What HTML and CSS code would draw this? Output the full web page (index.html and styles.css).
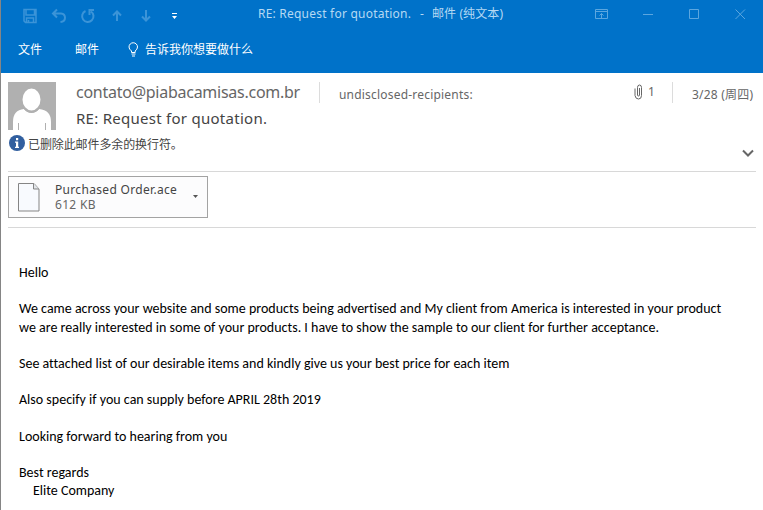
FILE: index.html
```html
<!DOCTYPE html>
<html lang="zh-CN">
<head>
<meta charset="utf-8">
<title>RE: Request for quotation.</title>
<link rel="stylesheet" href="styles.css">
</head>
<body>
<main class="window">
  <header class="ribbon">
    <div class="titlebar">
      <div class="quick">
        <svg width="16" height="16" viewBox="0 0 16 16"><path class="save" d="M2 1.500h12v13H3.500L2 13zM4 2v5h8.500V2M4.500 14v-4h7v4M6.500 12v2"/></svg>
        <svg width="16" height="16" viewBox="0 0 16 16"><path class="bold" d="M6 1.500 2 5.500l4 4M2.500 5.500h7.500q4 .5 4 4.200 0 3.800-4.500 4.300"/></svg>
        <svg width="16" height="16" viewBox="0 0 16 16"><path class="bold" d="M5.500 3a5.700 5.700 0 1 0 5.500.5M14 2H9.500v5"/></svg>
        <svg width="16" height="16" viewBox="0 0 16 16"><path class="bold" d="M8 13V4M4 7.500l4-4 4 4"/></svg>
        <svg width="16" height="16" viewBox="0 0 16 16"><path class="bold" d="M8 2v10M4 8.500l4 4 4-4"/></svg>
        <svg class="more" width="7" height="7" viewBox="0 0 7 7"><path d="M1 0h5v1H1zM1 3h5L3.500 6z"/></svg>
      </div>
      <div class="title"><span class="title-latin">RE: Request for quotation.</span><span class="dash">-</span><span class="title-cn">邮件 (纯文本)</span></div>
      <div class="controls">
        <svg width="14" height="11" viewBox="0 0 14 11"><path d="M.5.5h12v9H.5zM1 2.500h11M6.500 9V4.500M4.500 6.500l2-2 2 2"/></svg>
        <svg width="11" height="11" viewBox="0 0 11 11"><path d="M0 5.500h10"/></svg>
        <svg width="11" height="11" viewBox="0 0 11 11"><path d="M.5.5h9v9h-9z"/></svg>
        <svg width="11" height="11" viewBox="0 0 11 11"><path d="m.5.500 9.500 9.500M10 .5.500 10"/></svg>
      </div>
    </div>
    <nav class="tabs">
      <span class="tab-file">文件</span><span class="tab-mail">邮件</span>
      <svg width="11" height="15" viewBox="0 0 11 15"><path d="M3.500 10.500V9Q1 7.200 1 5a4.200 4.200 0 0 1 8.500 0Q9.500 7.200 7.200 9v1.500zM3.500 12h4M4 14h3"/></svg>
      <span class="tell">告诉我你想要做什么</span>
    </nav>
  </header>

  <section class="message-head">
    <div class="people">
      <svg class="avatar" width="48" height="48" viewBox="0 0 48 48"><path fill="#b0b0b0" d="M0 0h48v48H0z"/><path fill="#fff" d="M5 48v-8q0-12 11-13 3 4 7.500 4t7.500-4q12 1 12 13v8z"/><ellipse cx="23.500" cy="17.500" rx="10" ry="12" fill="#fff" stroke="#b0b0b0" stroke-width="2"/><path stroke="#b0b0b0" d="M10.500 41v7M37.500 41v7"/></svg>
      <div class="names">
        <div class="from">contato@piabacamisas.com.br</div>
        <div class="subject">RE: Request for quotation.</div>
      </div>
      <i class="rule"></i>
      <div class="to">undisclosed-recipients:</div>
      <svg class="clip" width="9" height="16" viewBox="0 0 9 16"><path d="M5.500 4v7q0 1-1 1t-1-1V3.500Q3.500 1 5.500 1T7.500 3.500v8Q7.500 15 4.500 15T1 11.500V4.500"/></svg>
      <div class="count">1</div>
      <i class="rule"></i>
      <div class="date">3/28 (周四)</div>
    </div>
    <div class="notice">
      <svg width="16" height="16" viewBox="0 0 16 16"><circle cx="8" cy="8" r="8" fill="#315f9f"/><path fill="#fff" d="M7 3h2.200v2.200H7zM6 6.500h3.200v5.300H10V13H6v-1.200h1V7.700H6z"/></svg>
      <span>已删除此邮件多余的换行符。</span>
      <svg class="expand" width="12" height="8" viewBox="0 0 12 8"><path d="m1 1.500 5 5 5-5"/></svg>
    </div>
  </section>

  <section class="attachments">
    <div class="file">
      <svg width="22" height="29" viewBox="0 0 22 29"><path fill="#f8fafe" stroke="#858585" d="M.5.5H16l5 5.500v22H.5z"/><path fill="#e2e5e9" stroke="#858585" d="M15.500.5V6H21"/></svg>
      <div class="file-text"><div class="file-name">Purchased Order.ace</div><div class="file-size">612 KB</div></div>
      <i class="caret"></i>
    </div>
  </section>

  <article class="mail">
    <p>Hello</p>
    <p>We came across your website and some products being advertised and My client from America is interested in your product<br>we are really interested in some of your products. I have to show the sample to our client for further acceptance.</p>
    <p>See attached list of our desirable items and kindly give us your best price for each item</p>
    <p>Also specify if you can supply before APRIL 28th 2019</p>
    <p>Looking forward to hearing from you</p>
    <p>Best regards<br><span class="company">Elite Company</span></p>
  </article>
</main>
</body>
</html>
```
FILE: styles.css
```css
* { box-sizing: border-box; }
body { margin: 0; background: #fff; font-family: "Noto Sans", "Noto Sans CJK SC", sans-serif; }
svg { display: block; flex: none; fill: none; }
.window { height: 510px; overflow: hidden; border-left: 1px solid #858585; }
.ribbon { height: 73px; background: #0072c9; }

.titlebar { display: flex; height: 30px; }
.quick { display: flex; gap: 13px; width: 257px; padding: 8px 0 0 21px; }
.quick svg { stroke: #3b94d8; }
.quick .save { stroke-width: 1.5; }
.quick .bold { stroke-width: 2; }
.quick .more { margin: 5px 0 0 4px; fill: #fff; stroke: none; }
.title { display: flex; flex: none; width: 337px; padding-top: 5px; font-size: 12px; line-height: 18px; color: #b5d9f3; white-space: nowrap; }
.title-latin { width: 162px; letter-spacing: .22px; }
.dash { width: 12px; }
.title-cn { letter-spacing: .1px; }
.controls { display: flex; gap: 35px; padding-top: 9px; }
.controls svg { stroke: #5ba6df; }
.controls svg:first-child { margin-right: -1px; }

.tabs { display: flex; align-items: center; height: 38px; padding-left: 17px; font-size: 12px; color: #fff; white-space: nowrap; }
.tab-file { width: 57px; }
.tab-mail { width: 53px; }
.tabs svg { stroke: #fff; }
.tell { margin-left: 6px; }

.message-head { height: 99px; margin: 0 7px; padding-top: 9px; border-bottom: 1px solid #d8d8d8; color: #666; }
.people { display: flex; height: 52px; white-space: nowrap; }
.people > * { flex: none; }
.names { width: 263px; padding-left: 20px; }
.from { font-size: 16px; line-height: 21px; letter-spacing: -.26px; }
.subject { margin-top: 3px; font-size: 15px; line-height: 24px; letter-spacing: .27px; color: #444; }
.rule { width: 1px; height: 21px; background: #dcdcdc; }
.to { width: 296px; padding: 3px 0 0 19px; font-size: 12px; line-height: 20px; letter-spacing: .2px; }
.clip { margin: 2px 5px 0 18px; stroke: #666; }
.count { width: 24px; font-size: 12px; line-height: 20px; }
.date { padding: 3px 0 0 19px; font-size: 12px; line-height: 20px; letter-spacing: .2px; }
.notice { display: flex; align-items: flex-start; padding: 1px 2px 0 1px; font-size: 12px; line-height: 18px; color: #444; }
.notice span { margin: 1px 0 0 3px; letter-spacing: -.1px; }
.expand { margin: 14px 0 0 auto; stroke: #666; stroke-width: 2; }

.attachments { height: 56px; margin: 0 7px; padding-top: 4px; border-bottom: 1px solid #d8d8d8; }
.file { display: flex; width: 200px; height: 42px; padding: 6px 0 0 9px; border: 1px solid #a3a3a3; background: #fcfcfd; }
.file-text { flex: none; width: 148px; margin-top: -1px; padding-left: 15px; font-size: 12px; line-height: 15px; letter-spacing: .32px; color: #666; white-space: nowrap; }
.file-name { color: #444; }
.caret { width: 5px; height: 3px; margin: 12px 0 0 5px; background: #555; clip-path: polygon(0 0, 100% 0, 50% 100%); }

.mail { padding: 36px 0 0 18px; font-family: Carlito, Calibri, Lato, sans-serif; font-size: 14px; line-height: 18.200px; font-variant-ligatures: none; color: #000; white-space: nowrap; }
.mail p { margin: 0 0 18.200px; }
.company { margin-left: 14px; }
```
